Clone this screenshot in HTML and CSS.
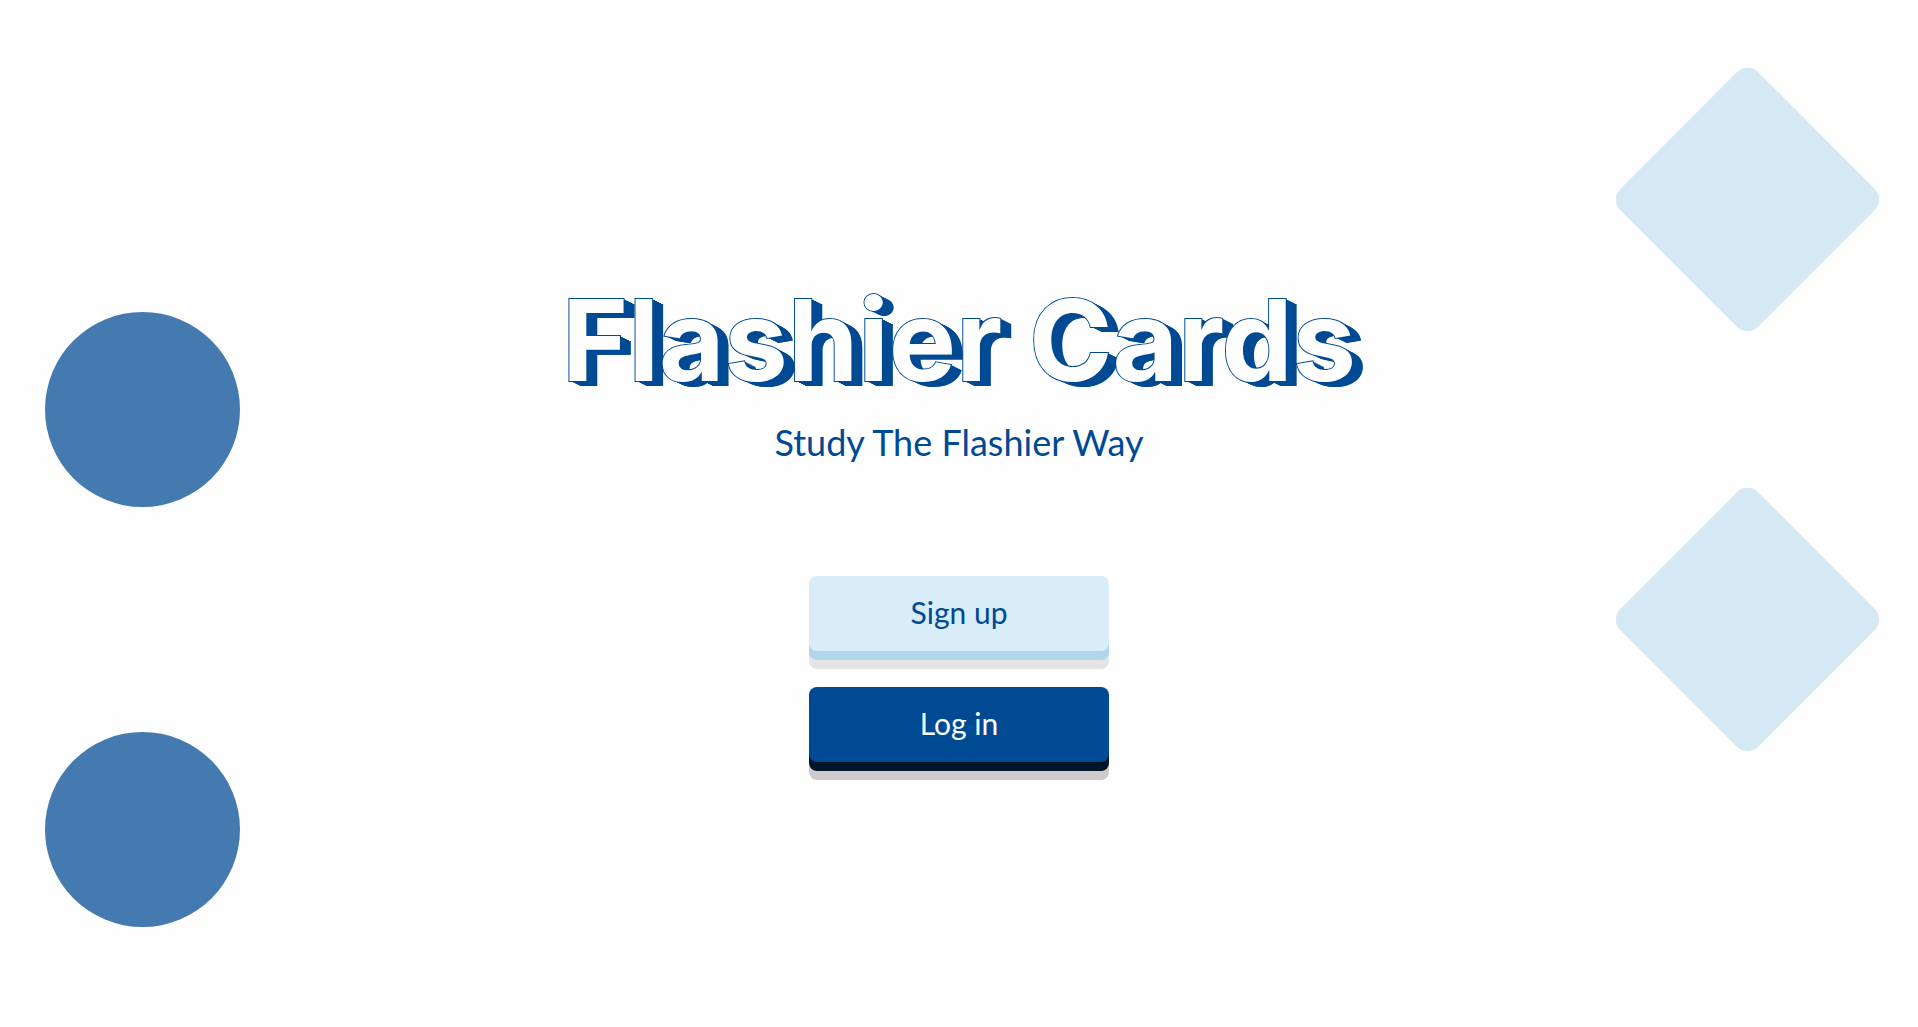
FILE: index.html
```html
<!DOCTYPE html>
<html lang="en">
<head>
    <meta charset="UTF-8">
    <meta name="viewport" content="width=device-width, initial-scale=1.0">
    <title>Flashier Cards</title>
    <link rel="stylesheet" href="styles.css">
</head>
<body>
    <div class="page">
        <div class="shapes shapes-left">
            <div class="circle"></div>
            <div class="circle"></div>
        </div>
        <main class="welcome">
            <h1 class="title">Flashier Cards</h1>
            <p class="subtitle">Study The Flashier Way</p>
            <div class="buttons">
                <button type="button" class="btn btn-signup">Sign up</button>
                <button type="button" class="btn btn-login">Log in</button>
            </div>
        </main>
        <div class="shapes shapes-right">
            <div class="diamond"></div>
            <div class="diamond"></div>
        </div>
    </div>
</body>
</html>
```
FILE: styles.css
```css
* {
    box-sizing: border-box;
}
body {
    font-family: Lato, sans-serif;
    background-color: #fefefe;
    color: #004a94;
    margin: 0;
}
.page {
    display: grid;
    grid-template-columns: 1fr auto 1fr;
    min-height: 100vh;
}

/* Decorative shapes */
.shapes {
    display: flex;
    flex-direction: column;
    gap: 225px;
}
.shapes-left {
    align-items: flex-start;
    padding: 312px 0 100px 45px;
}
.shapes-right {
    align-items: flex-end;
    padding: 102px 73px 100px 0;
}
.circle {
    width: 195px;
    height: 195px;
    border-radius: 50%;
    background-color: #457ab0;
}
.diamond {
    width: 195px;
    height: 195px;
    border-radius: 15px;
    background-color: #d5e9f4;
    transform: rotate(45deg);
}

.welcome {
    display: flex;
    flex-direction: column;
    align-items: center;
    padding-top: 272px;
    text-align: center;
}
.title {
    font-family: Inter, sans-serif;
    font-size: 113px;
    line-height: 136px;
    font-weight: 700;
    margin: 0;
    color: #fefefe;
    -webkit-text-stroke: 2px #004a94;
    paint-order: stroke fill;
    /* 3D block behind the letters */
    text-shadow:
        1px 0 #004a94,
        2px 1px #004a94,
        3px 1px #004a94,
        4px 2px #004a94,
        5px 2px #004a94,
        6px 3px #004a94,
        7px 3px #004a94,
        8px 4px #004a94,
        9px 4px #004a94,
        10px 5px #004a94,
        11px 5px #004a94;
}
.subtitle {
    font-size: 36px;
    line-height: 44px;
    margin: 12px 0 0;
}

/* Buttons */
.buttons {
    display: flex;
    flex-direction: column;
    gap: 36px;
    margin-top: 112px;
}
.btn {
    width: 300px;
    height: 75px;
    border: none;
    border-radius: 8px;
    padding: 0 0 3px;
    font-family: inherit;
    font-size: 30px;
    cursor: pointer;
}
.btn-signup {
    background-color: #d9edf8;
    color: #004a94;
    box-shadow: 0 9px 0 #b0d6eb, 0 18px 0 #e4e4e4;
}
.btn-login {
    background-color: #004a94;
    color: #fefefe;
    box-shadow: 0 9px 0 #001529, 0 18px 0 #cccccc;
}
.btn:hover {
    filter: brightness(1.05);
}
```
